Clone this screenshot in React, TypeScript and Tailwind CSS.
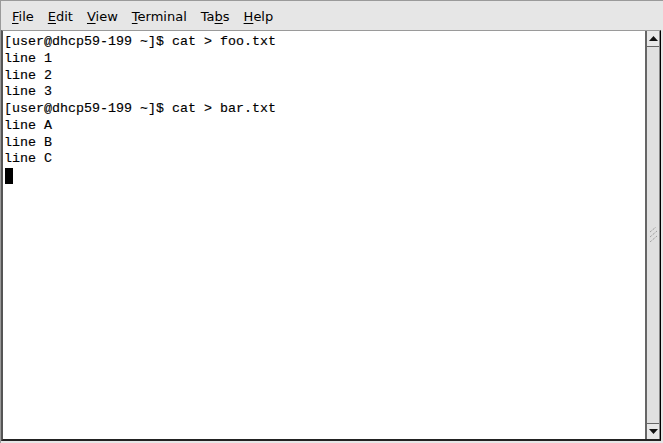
const lines = [
  "[user@dhcp59-199 ~]$ cat > foo.txt",
  "line 1",
  "line 2",
  "line 3",
  "[user@dhcp59-199 ~]$ cat > bar.txt",
  "line A",
  "line B",
  "line C",
];

const menus: [string, number][] = [
  ["File", 0],
  ["Edit", 0],
  ["View", 0],
  ["Terminal", 0],
  ["Tabs", 2],
  ["Help", 0],
];

function MenuItem({ label, u }: { label: string; u: number }) {
  return (
    <span className="px-[6px]">
      {label.slice(0, u)}
      <span className="underline underline-offset-2">{label[u]}</span>
      {label.slice(u + 1)}
    </span>
  );
}

export default function App() {
  return (
    <div className="w-[663px] h-[443px] bg-[#e6e6e6] border-t border-l border-[#9a9a9a] flex flex-col overflow-hidden">
      {/* menu bar */}
      <div className="h-[29px] flex items-center pt-[3px] pl-[5px] gap-[2px] text-[13px] text-black font-['DejaVu_Sans',sans-serif]">
        {menus.map(([m, u]) => (
          <MenuItem key={m} label={m} u={u} />
        ))}
      </div>

      {/* terminal */}
      <div className="flex-1 flex mr-[2px] mb-[2px] border-t border-[#9a9a9a] border-l-2 border-l-[#555] border-b-2 border-b-[#222] border-r border-r-black">
        <div className="flex-1 bg-white pt-[3px] pl-[1px] font-['Liberation_Mono',monospace] text-[13.33px] leading-[16.75px] text-black whitespace-pre [-webkit-text-stroke:0.15px_black]">
          {lines.map((l, i) => (
            <div key={i}>{l}</div>
          ))}
          <div className="h-[16.75px] flex items-center pl-[1px]">
            <div className="w-[8px] h-[16px] bg-black" />
          </div>
        </div>

        {/* scrollbar */}
        <div className="w-[15px] bg-[#e0e0e0] border-l-2 border-[#666] border-r border-r-[#888] flex flex-col">
          <div className="h-[16px] border-b border-[#666] bg-[#e8e8e8] flex items-center justify-center">
            <svg width="9" height="5" viewBox="0 0 9 5">
              <path d="M0 5 L4.5 0 L9 5 Z" fill="#111" />
            </svg>
          </div>
          <div className="flex-1 flex items-center justify-center">
            <svg width="9" height="15" viewBox="0 0 9 15" className="-mt-[2px]">
              <path d="M1 5 L7 0 M1 10 L8 4 M1 15 L8 9" stroke="#888" strokeWidth="1" strokeDasharray="1 1" />
            </svg>
          </div>
          <div className="h-[16px] border-t border-[#666] bg-[#e8e8e8] flex items-center justify-center">
            <svg width="9" height="5" viewBox="0 0 9 5">
              <path d="M0 0 L4.5 5 L9 0 Z" fill="#111" />
            </svg>
          </div>
        </div>
      </div>
    </div>
  );
}
